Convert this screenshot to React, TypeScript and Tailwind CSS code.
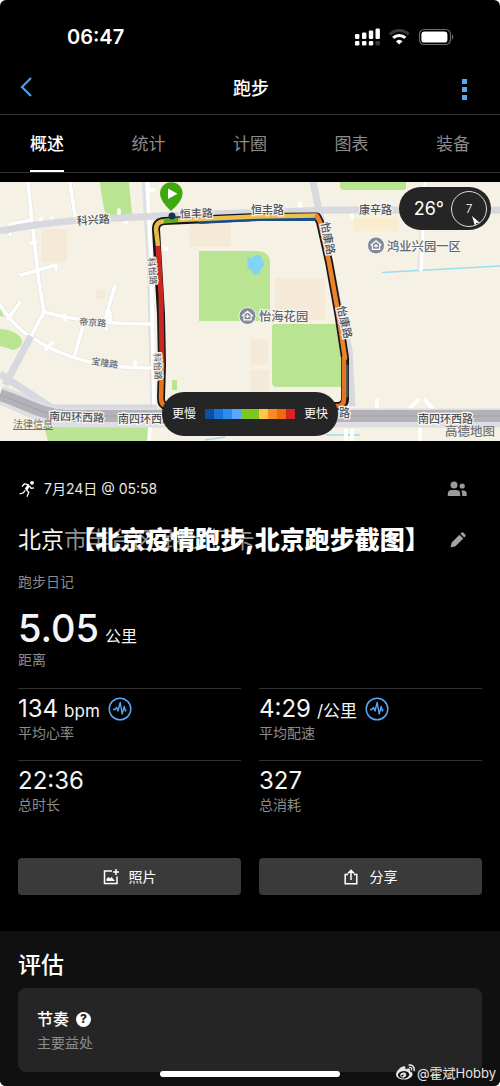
import React from "react";
import { FaWeibo } from "react-icons/fa";

const tabs = ["概述", "统计", "计圈", "图表", "装备"];

const stats = [
    { value: "134", unit: "bpm", label: "平均心率", chart: true },
    { value: "4:29", unit: "/公里", label: "平均配速", chart: true },
    { value: "22:36", unit: "", label: "总时长", chart: false },
    { value: "327", unit: "", label: "总消耗", chart: false },
];

const paceColors = [
    "bg-[#0850a8]",
    "bg-[#1976d8]",
    "bg-[#2f8df0]",
    "bg-[#58a6ff]",
    "bg-[#7dc81e]",
    "bg-[#7dc81e]",
    "bg-[#fdc84a]",
    "bg-[#fb8c24]",
    "bg-[#ee6c10]",
    "bg-[#d92222]",
];

function StatusBar() {
    return (
        <div className="flex h-[60px] items-center justify-between pt-[14px] pr-[46px] pl-[67px]">
            <span className="text-[20px] leading-6 font-semibold">06:47</span>
            <svg width="100" height="18" viewBox="0 0 100 18" aria-hidden="true">
                <g fill="#fff">
                    <rect x="1" y="6" width="4.4" height="5" rx="1.2" />
                    <rect x="8" y="4.5" width="4.4" height="6.5" rx="1.2" />
                    <rect x="14.8" y="2.5" width="4.4" height="8.5" rx="1.2" />
                    <rect x="21.5" y="0.5" width="4.4" height="10.5" rx="1.2" />
                    <rect x="1" y="13" width="4.4" height="4.4" rx="1.2" />
                    <rect x="8" y="13" width="4.4" height="4.4" rx="1.2" />
                    <rect x="14.8" y="13" width="4.4" height="4.4" rx="1.2" />
                    <rect x="21.5" y="13" width="4.4" height="4.4" rx="1.2" fill="#3a3a3a" />
                </g>
                <path d="M35.8 6.4a13.5 13.5 0 0 1 18.9 0" fill="none" stroke="#3a3a3a" strokeWidth="3" />
                <path d="M39.2 9.9a8.6 8.6 0 0 1 12.1 0" fill="none" stroke="#fff" strokeWidth="3" />
                <path d="M45.2 16.6l-3.3-3.4a4.8 4.8 0 0 1 6.6 0z" fill="#fff" />
                <rect x="65.5" y="1.5" width="31" height="15" rx="4.8" fill="none" stroke="#6b6b6b" strokeWidth="1.2" />
                <rect x="67.4" y="3.4" width="26" height="11.2" rx="3.2" fill="#fff" />
                <path d="M98 6.5c1.6.6 1.6 4.4 0 5z" fill="#7a7a7a" />
            </svg>
        </div>
    );
}

function Header() {
    return (
        <header className="flex h-[55px] items-center justify-between border-b border-[#333] pr-[30px] pl-4">
            <button type="button" aria-label="返回" className="flex w-5 justify-center">
                <svg width="14" height="20" viewBox="0 0 14 20" fill="none" stroke="#509eec" strokeWidth="2.2">
                    <path d="M12 1L3 10l9 9" />
                </svg>
            </button>
            <h1 className="pt-1 pl-2 text-[18px] leading-6 font-medium">跑步</h1>
            <button type="button" aria-label="更多" className="flex w-3 flex-col items-center gap-[3px] pt-1">
                <span className="size-[5px] bg-[#5aa5f2]" />
                <span className="size-[5px] bg-[#5aa5f2]" />
                <span className="size-[5px] bg-[#5aa5f2]" />
            </button>
        </header>
    );
}

function Tabs() {
    return (
        <nav className="flex h-[58px] justify-between border-b border-[#333] px-[30px]">
            {tabs.map((tab, i) => (
                <a
                    key={tab}
                    href="#"
                    className={
                        i === 0
                            ? "flex items-center border-b-2 border-white pt-1 text-[17px] font-medium text-white"
                            : "flex items-center border-b-2 border-transparent pt-1 text-[17px] text-[#8c8c8c]"
                    }
                >
                    {tab}
                </a>
            ))}
        </nav>
    );
}

function HouseMarker({ x, y }: { x: number; y: number }) {
    return (
        <g transform={`translate(${x} ${y})`}>
            <circle r="8.5" fill="#858a99" stroke="#fff" strokeWidth="0.8" />
            <path d="M-5.4 0L0-4.8 5.4 0M-3.6-.6v4.4h7.2V-.6M-2 .4h4M0-1.4v3.4" fill="none" stroke="#fff" strokeWidth="1.2" />
        </g>
    );
}

// Drawn in page units, the top edge of the map sits at y = 182
function RouteMap() {
    return (
        <svg viewBox="0 182 500 259" className="block w-full" role="img" aria-label="跑步路线">
            <rect y="182" width="500" height="259" fill="#f5f1e4" />
            {/* Blocks */}
            <g fill="#f5ead8">
                <path d="M41 229h26v33H41zM189 224h42v23h-42zM275 278h50v42h-50zM250 339h18v26h-18zM250 370h19v24h-19zM96 290h9v9h-9z" />
            </g>
            <path d="M354 218h44v13h-44z" fill="#faeccd" />
            <g fill="#b9e592">
                <path d="M100 182h29l3 33-26 1q-4-14-6-34z" />
                <path d="M340 182h66v7q-1 1-3 1h-60q-3-1-3-4z" />
                <path d="M199 251h59q12 1 12 12v45q0 13-13 13h-58z" />
                <path d="M275 324h62l6 42v21h-67q-4 0-4-5v-54q0-4 3-4z" />
                <path d="M0 329c10 0 21 5 22 12 0 8-9 9-9 9l-13-4z" />
                <path d="M44 427l4 14h101v-16z" />
                <path d="M172 380h5v10h-5zM0 308v8l4 1z" />
            </g>
            <path d="M247 257q5 3 8-2 7-1 7 5 4 4 1 7-3 0-3 6-4 3-7 1-1-5-6-6l1-4z" fill="#82d4f3" />
            <path d="M382 272.500L500 266M326 435h34M205 440l20-3" fill="none" stroke="#9bdcf0" strokeWidth="1.6" />

            {/* Side streets */}
            <g fill="none" stroke="#dedfe2" strokeWidth="4.6" strokeLinejoin="round" strokeLinecap="round">
                <path d="M28 182l4 40 7 60 5 30M70 182l5 34M144 182l5 80 4 150M10 235v-11l22-4M21 275l35-10v5M115 286l-9 30v14" />
                <path d="M44 312c30 8 60 12 109 12M44 312l-13 24M110 312v11M0 305q14 22 31 32c30 20 70 32 122 31M83 326l-8 28M20 302l-12 17M425 182l-5 88" />
            </g>
            <g fill="none" stroke="#fff" strokeWidth="3.6" strokeLinejoin="round" strokeLinecap="round">
                <path d="M28 182l4 40 7 60 5 30M70 182l5 34M148 182v8h6M147 182l4 80 3 150M10 235v-11l22-4M21 275l35-10v5M115 286l-9 30v14M158 249h9" />
                <path d="M44 312c30 8 60 12 109 12M44 312l-13 24M110 312v11M0 305q14 22 31 32c30 20 70 32 122 31M83 326l-8 28M20 302l-12 17M425 182l-4 88M119 210v6M126 218v5M135 362v6M65 320v-5M52 343l-6 6" />
                <path d="M352 218l-1-8M300 203v6M377 400v8M410 408l8-8M425 400l7 8M420 428v13M346 430v11M352 430v11M150 425l-1 16M32 243l3-1M52 218v4M41 219v4" />
            </g>
            {/* Main roads */}
            <g fill="none" stroke="#d8d8df" strokeLinejoin="round">
                <path d="M0 231c50-10 90-12 160-15l170-6h170" strokeWidth="7" />
                <path d="M313 182l8 38 16 78 12 52 3 56" strokeWidth="7" />
                <path d="M31 336L5 385M0 374l52 34h105" strokeWidth="7" />
            </g>
            <path d="M0 395c25 8 40 21 65 23h435" fill="none" stroke="#dedee4" strokeWidth="19" />
            <path d="M0 395c25 8 40 19 65 21h435" fill="none" stroke="#b2b2b8" strokeWidth="12" />
            <path d="M0 395c25 8 40 19 65 21h435" fill="none" stroke="#a1a1a8" strokeWidth="1" />

            {/* Route */}
            <g fill="none" strokeLinejoin="round" strokeLinecap="round">
                <path
                    d="M317 216.500l3 5.500 9 40 9 50 7 46v41q0 6-6 7H166q-5-1-5-8l1-34-1-50-4-68-1-17q0-7 8-8l93-4z"
                    stroke="#161616"
                    strokeWidth="8"
                />
                <path d="M200 222l57-3 58 0" stroke="#164d8e" strokeWidth="4" />
                <path d="M347 366v30" stroke="#37506d" strokeWidth="3" />
                <path d="M178 220l-14 1" stroke="#64a924" strokeWidth="5" strokeLinecap="butt" />
                <path d="M164 221q-8 1-8 8l2 17" stroke="#e8ba49" strokeWidth="4.600" strokeLinecap="butt" />
                <path d="M158 246l3 50 1 70" stroke="#c92721" strokeWidth="5" strokeLinecap="butt" />
                <path d="M162 364l-1 34q0 7 5 8h173q5-1 5-7v-41" stroke="#e67520" strokeWidth="4.600" />
                <path d="M178 220l79-3.500 60-1" stroke="#ecc04f" strokeWidth="4.600" strokeLinecap="butt" />
                <path d="M317 216l3 6 9 40 9 50 7 46" stroke="#ec832b" strokeWidth="4.600" />
            </g>
            <circle cx="172" cy="216" r="3.500" fill="#17304d" />
            <path d="M171 211q-11-10-11-17.500a11.300 11.300 0 0 1 22.600 0Q182.600 201 171 211z" fill="#3fa80c" />
            <path d="M168 188.500v10.500l9.500-5.300z" fill="#fff" />

            {/* Labels */}
            <g
                fill="#50525c"
                stroke="#f8f6ee"
                strokeWidth="2.500"
                paintOrder="stroke"
                fontWeight="500"
                strokeLinejoin="round"
                style={{ fontFamily: '"Noto Sans CJK SC", sans-serif' }}
            >
                <g fontSize="11">
                    <text x="77" y="225" transform="rotate(-4 77 225)">科兴路</text>
                    <text x="180" y="218" transform="rotate(-2 180 218)">恒丰路</text>
                    <text x="251" y="214">恒丰路</text>
                    <text x="359" y="214">康辛路</text>
                    <text x="321" y="223" transform="rotate(79 321 223)">怡康路</text>
                    <text x="337" y="307" transform="rotate(77 337 307)">怡康路</text>
                    <text x="49" y="420" transform="rotate(2 49 420)">南四环西路</text>
                    <text x="118" y="423">南四环西路</text>
                    <text x="339" y="417">路</text>
                    <text x="418" y="423">南四环西路</text>
                </g>
                <g fontSize="9" fill="#686a74">
                    <text x="148" y="258" transform="rotate(85 148 258)">科怡路</text>
                    <text x="154" y="353" transform="rotate(88 154 353)">科怡路</text>
                    <text x="79" y="325" transform="rotate(3 79 325)">帝京路</text>
                    <text x="91" y="364" transform="rotate(9 91 364)">宝隆路</text>
                </g>
                <g fontSize="12.300" fill="#626777">
                    <text x="387" y="251">鸿业兴园一区</text>
                    <text x="259" y="321">怡海花园</text>
                </g>
            </g>
            <HouseMarker x={376} y={245.500} />
            <HouseMarker x={247.500} y={316} />
            <g style={{ fontFamily: '"Noto Sans CJK SC", sans-serif' }}>
                <text x="13" y="428" fontSize="10" fill="#77736c" textDecoration="underline">法律信息</text>
                <text x="445" y="436" fontSize="12.500" fontWeight="500" fill="#77757a">高德地图</text>
            </g>
        </svg>
    );
}

function MapPanel() {
    return (
        <section className="relative mt-[9px]">
            <RouteMap />
            {/* Weather */}
            <div className="absolute top-[5px] right-[9px] flex h-[43px] items-center gap-[7px] rounded-full bg-[#252525] pr-1 pl-[15px]">
                <span className="text-[18px] leading-6">26°</span>
                <span className="relative flex size-9 items-center justify-center rounded-full border border-[#ddd] text-[12px] font-light">
                    7
                    <svg className="absolute right-[6px] bottom-0" width="8" height="10" viewBox="0 0 8 10" fill="#fff">
                        <path d="M0 0l8 7-3.600-.3L3 10z" />
                    </svg>
                </span>
            </div>
            {/* Pace legend */}
            <div className="absolute bottom-[5px] left-1/2 flex h-[44px] -translate-x-1/2 items-center gap-[9px] rounded-full bg-[#252525] px-[10px] text-[12px] whitespace-nowrap">
                <span>更慢</span>
                <span className="flex">
                    {paceColors.map((color, i) => (
                        <span key={i} className={`h-[10px] w-[9px] ${color}`} />
                    ))}
                </span>
                <span>更快</span>
            </div>
        </section>
    );
}

function ChartIcon() {
    return (
        <svg width="24" height="24" viewBox="0 0 24 24" fill="none" stroke="#5aa5f2" aria-hidden="true">
            <circle cx="12" cy="12" r="10.800" strokeWidth="1.500" />
            <path d="M5 12.500h2l1.500-2 1.500 3.500 2.200-8.500 2 11.500 2-7.500 1.200 4.500.8-1.500" strokeWidth="1.400" strokeLinejoin="round" />
        </svg>
    );
}

function Summary() {
    return (
        <section className="px-[18px] pt-9">
            <div className="flex h-6 items-center justify-between pr-[15px]">
                <div className="flex items-center gap-2">
                    <svg width="18" height="18" viewBox="0 0 18 18" fill="none" stroke="#fff" strokeLinejoin="round" aria-hidden="true">
                        <circle cx="14" cy="2.800" r="1.900" fill="#fff" stroke="none" />
                        <path d="M10.800 5.200L8 9.800" strokeWidth="3" />
                        <path d="M11 4.800L6.500 3.800 4 6.500M11.500 5.800l1.600 2.600 2.900-.6M8.200 9.600l2.600 2.600-1.800 4.600M7.200 10.300l-2 2.600L1.500 14" strokeWidth="1.300" />
                    </svg>
                    <span className="text-[14px] leading-6 text-[#e8e8e8]">7月24日 @ 05:58</span>
                </div>
                <button type="button" aria-label="隐私">
                    <svg width="20" height="16" viewBox="0 0 20 16" fill="#9b9b9b">
                        <circle cx="7" cy="4" r="3.500" />
                        <path d="M.8 15v-2q0-4 4-4h4.400q4 0 4 4v2z" />
                        <circle cx="15.200" cy="5" r="2.600" />
                        <path d="M14.200 9.500h2.300q3.200.2 3.200 3.200V15h-4.500v-2q0-2-1-3.500z" />
                    </svg>
                </button>
            </div>

            <div className="relative mt-[19px] flex h-10 items-center justify-between pr-[15px]">
                <h2 className="text-[23px] leading-8 text-[#8e8e8e]">
                    <span className="text-[#f2f2f2]">北京</span>市丰台区 跑步打卡
                </h2>
                <button type="button" aria-label="编辑">
                    <svg width="18" height="18" viewBox="0 0 18 18" fill="#a3a3a3">
                        <path d="M1.500 16.500l1.200-5 7.800-7.800 3.800 3.800-7.800 7.800zM11.400 2.800l1-1q1-1 2 0l1.800 1.800q1 1 0 2l-1 1z" />
                    </svg>
                </button>
                <strong className="absolute inset-x-0 text-center text-[25px] leading-8 font-black whitespace-nowrap">
                    【北京疫情跑步,北京跑步截图】
                </strong>
            </div>

            <p className="mt-3 text-[14px] leading-5 text-[#8c8c8c]">跑步日记</p>
            <p className="mt-4 flex h-10 items-baseline gap-1.5 text-[#f5f5f5]">
                <span className="text-[38px] leading-10 font-medium">5.05</span>
                <span className="text-[16px] leading-5">公里</span>
            </p>
            <p className="mt-0.5 text-[14px] leading-5 text-[#8c8c8c]">距离</p>

            <div className="mt-[18px] grid grid-cols-2 gap-x-[18px]">
                {stats.map((stat) => (
                    <div key={stat.label} className="h-[72px] border-t border-[#303030] pt-1.5">
                        <div className="flex h-7 items-center gap-2 text-[#f5f5f5]">
                            <span className="flex items-baseline gap-1.5">
                                <span className="text-[24px] leading-7">{stat.value}</span>
                                {stat.unit && <span className="text-[17px] leading-5">{stat.unit}</span>}
                            </span>
                            {stat.chart && <ChartIcon />}
                        </div>
                        <p className="text-[14px] leading-5 text-[#8c8c8c]">{stat.label}</p>
                    </div>
                ))}
            </div>

            <div className="mt-[26px] grid grid-cols-2 gap-x-[18px] text-[14px]">
                <button type="button" className="flex h-[37px] items-center justify-center gap-[10px] rounded bg-[#3a3a3a]">
                    <svg width="16" height="16" viewBox="0 0 16 16" fill="none" stroke="#fff" strokeWidth="1.500" aria-hidden="true">
                        <path d="M9 2H1.500v12.500H14V7.500M13 0v6M10 3h6" />
                        <path d="M3.500 12V10l2-2 1.500 1.500L8.500 8l3.500 4z" fill="#fff" stroke="none" />
                    </svg>
                    照片
                </button>
                <button type="button" className="flex h-[37px] items-center justify-center gap-3 rounded bg-[#3a3a3a]">
                    <svg width="14" height="16" viewBox="0 0 14 16" fill="none" stroke="#fff" strokeWidth="1.500" aria-hidden="true">
                        <path d="M4 5.500H1.200v9.200h11.600V5.500H10M7 11V1.500M3.800 4.500L7 1.300l3.200 3.200" />
                    </svg>
                    分享
                </button>
            </div>
        </section>
    );
}

function Evaluation() {
    return (
        <section className="mt-9 grow bg-[#101010] px-[18px] pt-4 pb-3.5">
            <h2 className="text-[23px] leading-9 font-medium">评估</h2>
            <div className="mt-[5px] rounded-lg bg-[#252525] px-[19px] py-[18px]">
                <div className="flex items-center gap-[7px]">
                    <h3 className="text-[16px] leading-[26px] font-medium">节奏</h3>
                    <button
                        type="button"
                        aria-label="帮助"
                        className="flex size-[15px] items-center justify-center rounded-full bg-white text-[12px] leading-none font-extrabold text-[#252525]"
                    >
                        ?
                    </button>
                </div>
                <p className="text-[14px] leading-[22px] text-[#8c8c8c]">主要益处</p>
            </div>
        </section>
    );
}

export default function App() {
    return (
        <main className="relative flex min-h-screen flex-col overflow-hidden rounded-md bg-black font-['Inter','Noto_Sans_CJK_SC',sans-serif] text-white">
            <StatusBar />
            <Header />
            <Tabs />
            <MapPanel />
            <Summary />
            <Evaluation />
            {/* Home indicator and watermark */}
            <div className="absolute bottom-[9px] left-1/2 h-1.5 w-[36%] -translate-x-1/2 rounded-full bg-white" />
            <div className="absolute right-1 bottom-1 flex items-center gap-[2px] text-[13px] leading-[18px] text-[#e6e6e6]">
                <FaWeibo size={19} />
                <span>@霍斌Hobby</span>
            </div>
        </main>
    );
}
